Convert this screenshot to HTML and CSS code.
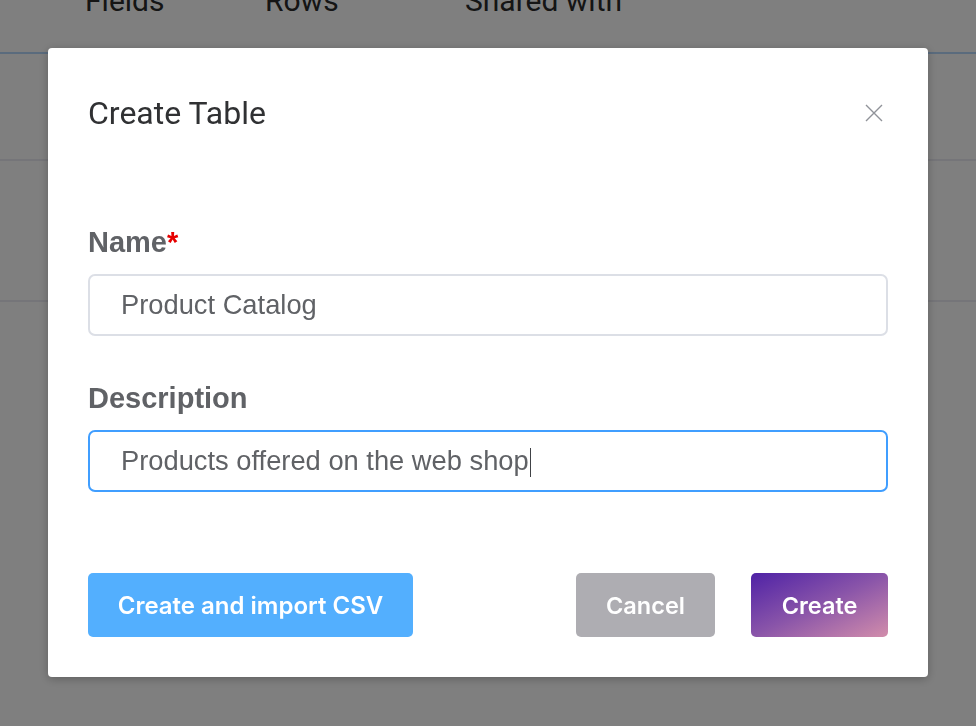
FILE: index.html
```html
<!DOCTYPE html>
<html lang="en">
<head>
    <meta charset="UTF-8">
    <title>Tables</title>
    <meta name="viewport" content="width=device-width, initial-scale=1">
    <link rel="stylesheet" href="styles.css">
</head>
<body>
<div id="page">
    <div class="table-head">
        <span class="col col-fields">Fields</span>
        <span class="col col-rows">Rows</span>
        <span class="col col-shared">Shared with</span>
    </div>
    <div class="table-row"></div>
    <div class="table-row table-row-tall"></div>
</div>

<div class="overlay">
    <div class="dialog" role="dialog">
        <div class="dialog-header">
            <h2 class="dialog-title">Create Table</h2>
            <button type="button" class="btn-close" aria-label="Close">
                <svg width="18" height="18" viewBox="0 0 18 18">
                    <path d="M1 1L17 17M17 1L1 17" stroke="#909399" stroke-width="1.4" fill="none"/>
                </svg>
            </button>
        </div>
        <form class="dialog-body">
            <label class="field">
                <span class="field-label">Name<em class="required">*</em></span>
                <input class="input" name="name" value="Product Catalog">
            </label>
            <label class="field">
                <span class="field-label">Description</span>
                <span class="input input-focus">Products offered on the web shop<i class="caret"></i></span>
            </label>
        </form>
        <div class="dialog-footer">
            <button type="button" class="btn btn-import">Create and import CSV</button>
            <div class="footer-right">
                <button type="button" class="btn btn-cancel">Cancel</button>
                <button type="button" class="btn btn-create">Create</button>
            </div>
        </div>
    </div>
</div>
</body>
</html>
```

FILE: styles.css
```css
* {
    box-sizing: border-box;
    margin: 0;
    padding: 0;
}

body {
    background: #fff;
    font-family: "Liberation Sans", Arial, sans-serif;
    overflow: hidden;
}

/* page behind the dialog */
#page {
    height: 726px;
}

.table-head {
    display: flex;
    height: 54px;
    padding-left: 85px;
    border-bottom: 2px solid #b4d6fa;
    font-family: Roboto, sans-serif;
    font-size: 30px;
    color: #2a2a2a;
    line-height: 30px;
}

.table-head .col {
    display: block;
    margin-top: -14px;
}

.col-fields {
    width: 180px;
}

.col-rows {
    width: 200px;
}

.table-row {
    height: 107px;
    border-bottom: 2px solid #ebebf2;
}

.table-row-tall {
    height: 141px;
}

/* dialog */
.overlay {
    position: fixed;
    inset: 0;
    background: rgba(0, 0, 0, 0.5);
    padding: 48px;
}

.dialog {
    background: #fff;
    border-radius: 4px;
    box-shadow: 0 2px 10px rgba(0, 0, 0, 0.25);
    padding: 45px 40px 40px;
}

.dialog-header {
    display: flex;
    align-items: center;
    justify-content: space-between;
    height: 40px;
}

.dialog-title {
    font-family: Roboto, sans-serif;
    font-weight: 400;
    font-size: 32px;
    line-height: 40px;
    color: #303133;
}

.btn-close {
    border: none;
    background: none;
    width: 18px;
    height: 18px;
    margin-right: 5px;
    cursor: pointer;
}

.btn-close svg {
    display: block;
}

.dialog-body {
    display: grid;
    gap: 46px;
    margin-top: 93px;
}

.field {
    display: grid;
    gap: 16px;
}

.field-label {
    font-weight: 700;
    font-size: 29px;
    line-height: 32px;
    color: #606266;
}

.required {
    font-style: normal;
    color: #e60000;
}

.input {
    display: flex;
    align-items: center;
    height: 62px;
    width: 100%;
    padding: 0 31px;
    border: 2px solid #dcdfe6;
    border-radius: 7px;
    font-family: "Liberation Sans", Arial, sans-serif;
    font-size: 27.3px;
    color: #606266;
    background: #fff;
    outline: none;
}

.input-focus {
    border-color: #409eff;
}

.caret {
    display: inline-block;
    width: 1.5px;
    height: 29px;
    margin-left: 1px;
    margin-top: 2px;
    background: #404246;
}

.dialog-footer {
    display: flex;
    justify-content: space-between;
    margin-top: 81px;
}

.footer-right {
    display: flex;
    gap: 36px;
}

.btn {
    height: 64px;
    border: none;
    border-radius: 5px;
    font-family: Inter, sans-serif;
    font-weight: 600;
    font-size: 23.5px;
    color: #fff;
    cursor: pointer;
}

.btn-import {
    width: 325px;
    background: #53affe;
    font-size: 24px;
}

.btn-cancel {
    width: 139px;
    background: #aeadb2;
}

.btn-create {
    width: 137px;
    background: linear-gradient(155deg, #4f22a6 0%, #8a55a9 50%, #d28dab 100%);
}
```
